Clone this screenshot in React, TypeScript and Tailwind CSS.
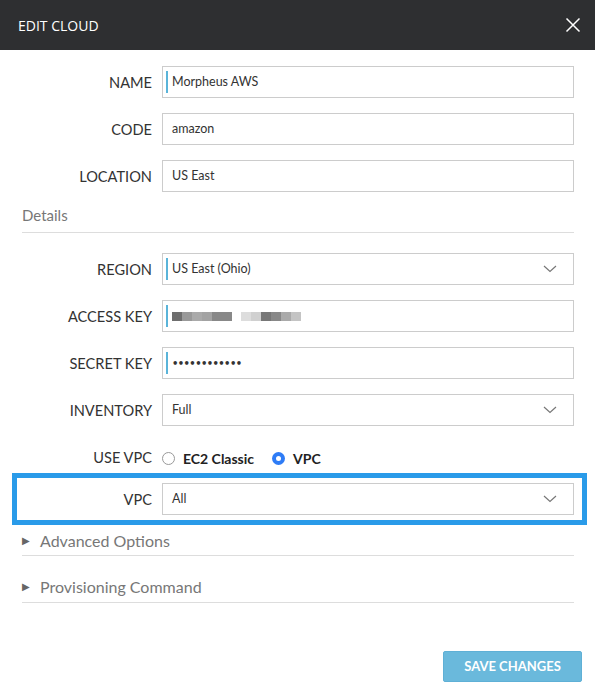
import React from "react";

const font = { fontFamily: "Lato, 'Open Sans', sans-serif" };

function Chevron() {
  return (
    <svg width="14" height="8" viewBox="0 0 14 8" className="shrink-0">
      <path d="M1 1 L7 6.5 L13 1" fill="none" stroke="#777" strokeWidth="1.2" />
    </svg>
  );
}

function Bar() {
  return <span className="w-[2px] h-[22px] bg-[#5ab4d9] mr-[4px] shrink-0" />;
}

function Row({
  label,
  children,
  select,
  accent,
}: {
  label: string;
  children: React.ReactNode;
  select?: boolean;
  accent?: boolean;
}) {
  return (
    <div className="flex items-center">
      <div className="w-[130px] text-right text-[14.6px] text-[#333] shrink-0 pt-[2px]">{label}</div>
      <div className="ml-[10px] flex-1 h-[32px] border border-[#ccc] flex items-center pl-[3px] pr-[16px]">
        {accent ? <Bar /> : <span className="w-[6px] shrink-0" />}
        <div className="flex-1 text-[12.5px] text-[#333] flex items-center pt-[1px]">{children}</div>
        {select && <Chevron />}
      </div>
    </div>
  );
}

const blur1 = ["#6e6e6e", "#999", "#aaa", "#a3a3a3", "#888", "#888"];
const blur2 = ["#ddd", "#d0d0d0", "#777", "#888", "#aaa", "#c4c4c4"];

export default function App() {
  return (
    <div className="w-[595px] h-[697px] bg-white" style={font}>
      <div className="h-[50px] bg-[#2e2f31] flex items-center justify-between pl-[18px] pr-[14px]">
        <span className="text-white text-[14px]" style={{ fontFamily: "'Open Sans', sans-serif" }}>
          EDIT CLOUD
        </span>
        <svg width="16" height="16" viewBox="0 0 16 16">
          <path d="M1.5 1.5 L14.5 14.5 M14.5 1.5 L1.5 14.5" stroke="#fff" strokeWidth="1.5" />
        </svg>
      </div>

      <div className="pl-[22px] pr-[21px] pt-[16px]">
        <div className="flex flex-col gap-[15px]">
          <Row label="NAME" accent>Morpheus AWS</Row>
          <Row label="CODE">amazon</Row>
          <Row label="LOCATION">US East</Row>
        </div>

        <div className="pt-[15px] pb-[8px] border-b border-[#ddd] text-[15px] text-[#777] leading-[17px]">
          Details
        </div>

        <div className="flex flex-col gap-[15px] mt-[20px]">
          <Row label="REGION" select accent>US East (Ohio)</Row>
          <Row label="ACCESS KEY" accent>
            <div className="flex items-center">
              <div className="flex">
                {blur1.map((c, i) => (
                  <span key={i} className="w-[10px] h-[9px]" style={{ background: c }} />
                ))}
              </div>
              <div className="flex ml-[9px]">
                {blur2.map((c, i) => (
                  <span key={i} className="w-[10px] h-[9px]" style={{ background: c }} />
                ))}
              </div>
            </div>
          </Row>
          <Row label="SECRET KEY" accent>
            <span
              className="text-[10px] tracking-[-0.6px] font-bold text-[#333]"
              style={{ fontFamily: "'DejaVu Sans', sans-serif" }}
            >
              ••••••••••••
            </span>
          </Row>
          <Row label="INVENTORY" select>Full</Row>
        </div>

        <div className="flex items-center h-[24px] mt-[20px]">
          <div className="w-[130px] text-right text-[14.6px] text-[#333] shrink-0">USE VPC</div>
          <div className="ml-[10px] flex items-center">
            <span className="w-[13px] h-[13px] rounded-full border border-[#999] bg-white" />
            <span className="ml-[8px] text-[14px] font-bold text-[#222]">EC2 Classic</span>
            <span className="ml-[18px] w-[13px] h-[13px] rounded-full bg-[#2e7cf6] flex items-center justify-center">
              <span className="w-[5px] h-[5px] rounded-full bg-white" />
            </span>
            <span className="ml-[8px] text-[14px] font-bold text-[#222]">VPC</span>
          </div>
        </div>

        <div className="mt-[3px] -ml-[10px] -mr-[13px] border-[5px] border-[#2a9be9] pl-[5px] pr-[8px] py-[5px]">
          <Row label="VPC" select>All</Row>
        </div>

        <div className="pt-[7px] pb-[6px] border-b border-[#ddd] flex items-center leading-[17px]">
          <span className="text-[10px] text-[#666] w-[18px]">▶</span>
          <span className="text-[16px] text-[#777]">Advanced Options</span>
        </div>
        <div className="pt-[22px] pb-[7px] border-b border-[#ddd] flex items-center leading-[17px]">
          <span className="text-[10px] text-[#666] w-[18px]">▶</span>
          <span className="text-[16px] text-[#777]">Provisioning Command</span>
        </div>

        <div className="flex justify-end mt-[48px] mr-[-8px]">
          <button className="w-[139px] h-[31px] bg-[#6ab9dc] border border-[#5fb0d6] rounded-[2px] text-white text-[13px] font-bold">
            SAVE CHANGES
          </button>
        </div>
      </div>
    </div>
  );
}
